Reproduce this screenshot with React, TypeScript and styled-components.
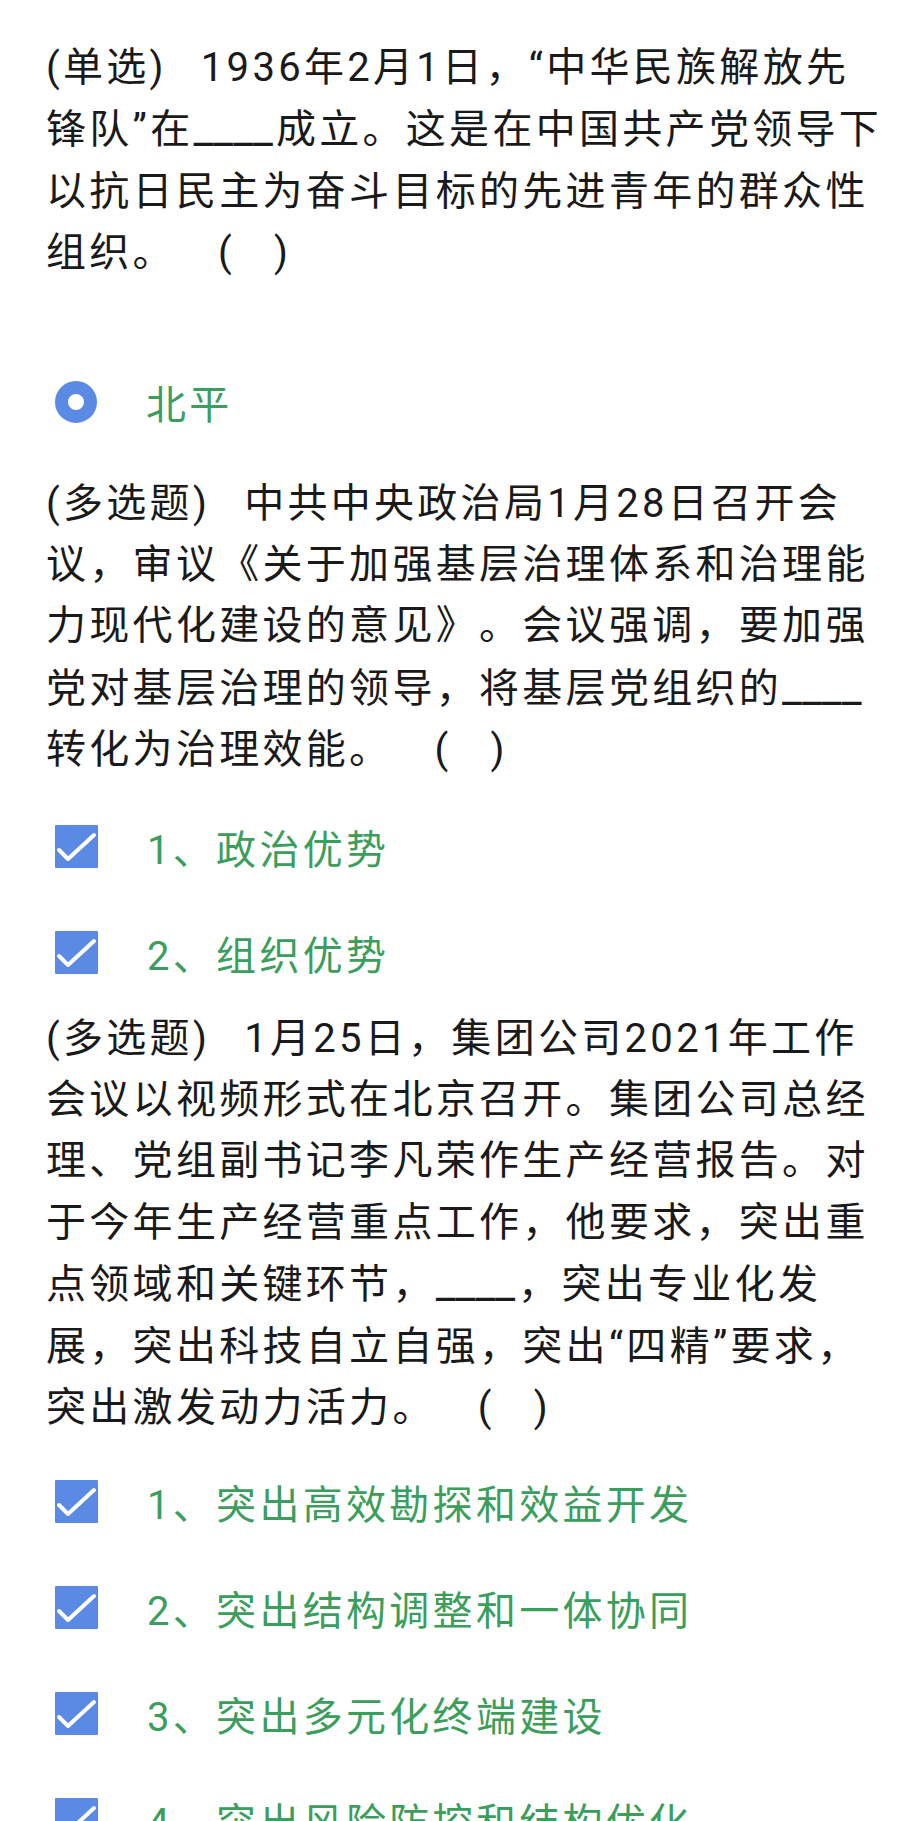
import React from "react";
import styled, { createGlobalStyle } from "styled-components";

const GlobalStyle = createGlobalStyle`
  html, body {
    margin: 0;
    padding: 0;
    background: #ffffff;
  }
  body {
    font-family: Roboto, "Noto Sans CJK SC", "Noto Sans", sans-serif;
    text-spacing-trim: space-all;
  }
`;

const BLUE = "#5a8ae3";
const GREEN = "#3b9e5c";
const INK = "#1a1a1a";

const Page = styled.main`
  box-sizing: border-box;
  width: 915px;
  padding: 37px 20px 0 46px;
  display: flex;
  flex-direction: column;
`;

const Section = styled.section<{ $after: number }>`
  display: flex;
  flex-direction: column;
  margin-bottom: ${(p) => p.$after}px;
`;

const QuestionText = styled.div`
  font-family: Roboto, "Noto Sans CJK SC", sans-serif;
  font-size: 40px;
  line-height: 61.4px;
  letter-spacing: 3.3px;
  color: ${INK};
  text-spacing-trim: space-all;
`;

const Line = styled.span`
  display: block;
  white-space: nowrap;
`;

const TypeTag = styled.span`
  margin-right: 34px;
`;

const Blank = styled.span`
  font-size: 44px;
  letter-spacing: 0;
  margin-right: 3px;
`;

const Paren = styled.span`
  margin-left: 42px;
`;

const ParenGap = styled.span`
  display: inline-block;
  width: 39px;
`;

const OptionList = styled.ul<{ $before: number }>`
  list-style: none;
  margin: ${(p) => p.$before}px 0 0 0;
  padding: 0;
  display: flex;
  flex-direction: column;
`;

const OptionRow = styled.li`
  height: 106px;
  display: flex;
  align-items: center;
  gap: 49px;
  padding-left: 9px;
`;

const OptionLabel = styled.span`
  font-family: Roboto, "Noto Sans CJK SC", sans-serif;
  font-size: 40px;
  letter-spacing: 3.3px;
  color: ${GREEN};
  white-space: nowrap;
  text-spacing-trim: space-all;
`;

const RadioMark = styled.span`
  box-sizing: border-box;
  width: 42px;
  height: 42px;
  border-radius: 50%;
  border: 13px solid ${BLUE};
  background: #fff;
  flex: none;
`;

const CheckSvg = styled.svg`
  width: 43px;
  height: 43px;
  flex: none;
  display: block;
`;

const CheckMark = () => (
  <CheckSvg viewBox="0 0 43 43">
    <rect x="0" y="0" width="43" height="43" rx="1" fill={BLUE} />
    <polyline
      points="4,25 13,34 39,10"
      fill="none"
      stroke="#ffffff"
      strokeWidth="4"
      strokeLinecap="round"
      strokeLinejoin="round"
    />
  </CheckSvg>
);

type Question = {
  tag: string;
  lines: string[];
  kind: "radio" | "check";
  options: string[];
  before: number;
  after: number;
};

const questions: Question[] = [
  {
    tag: "(单选)",
    lines: [
      "1936年2月1日，“中华民族解放先",
      "锋队”在____成立。这是在中国共产党领导下",
      "以抗日民主为奋斗目标的先进青年的群众性",
      "组织。",
    ],
    kind: "radio",
    options: ["北平"],
    before: 65,
    after: 18,
  },
  {
    tag: "(多选题)",
    lines: [
      "中共中央政治局1月28日召开会",
      "议，审议《关于加强基层治理体系和治理能",
      "力现代化建设的意见》。会议强调，要加强",
      "党对基层治理的领导，将基层党组织的____",
      "转化为治理效能。",
    ],
    kind: "check",
    options: ["1、政治优势", "2、组织优势"],
    before: 13,
    after: 2,
  },
  {
    tag: "(多选题)",
    lines: [
      "1月25日，集团公司2021年工作",
      "会议以视频形式在北京召开。集团公司总经",
      "理、党组副书记李凡荣作生产经营报告。对",
      "于今年生产经营重点工作，他要求，突出重",
      "点领域和关键环节，____，突出专业化发",
      "展，突出科技自立自强，突出“四精”要求，",
      "突出激发动力活力。",
    ],
    kind: "check",
    options: [
      "1、突出高效勘探和效益开发",
      "2、突出结构调整和一体协同",
      "3、突出多元化终端建设",
      "4、突出风险防控和结构优化",
    ],
    before: 10,
    after: 0,
  },
];

const renderLine = (text: string) =>
  text.split(/(____)/).map((part, i) =>
    part === "____" ? <Blank key={i}>{part}</Blank> : <React.Fragment key={i}>{part}</React.Fragment>
  );

export default function App() {
  return (
    <>
      <GlobalStyle />
      <Page>
        {questions.map((q, qi) => (
          <Section key={qi} $after={q.after}>
            <QuestionText>
              {q.lines.map((line, li) => (
                <Line key={li}>
                  {li === 0 && <TypeTag>{q.tag}</TypeTag>}
                  {renderLine(line)}
                  {li === q.lines.length - 1 && (
                    <Paren>
                      (<ParenGap />)
                    </Paren>
                  )}
                </Line>
              ))}
            </QuestionText>
            <OptionList $before={q.before}>
              {q.options.map((opt, oi) => (
                <OptionRow key={oi}>
                  {q.kind === "radio" ? <RadioMark /> : <CheckMark />}
                  <OptionLabel>{opt}</OptionLabel>
                </OptionRow>
              ))}
            </OptionList>
          </Section>
        ))}
      </Page>
    </>
  );
}
